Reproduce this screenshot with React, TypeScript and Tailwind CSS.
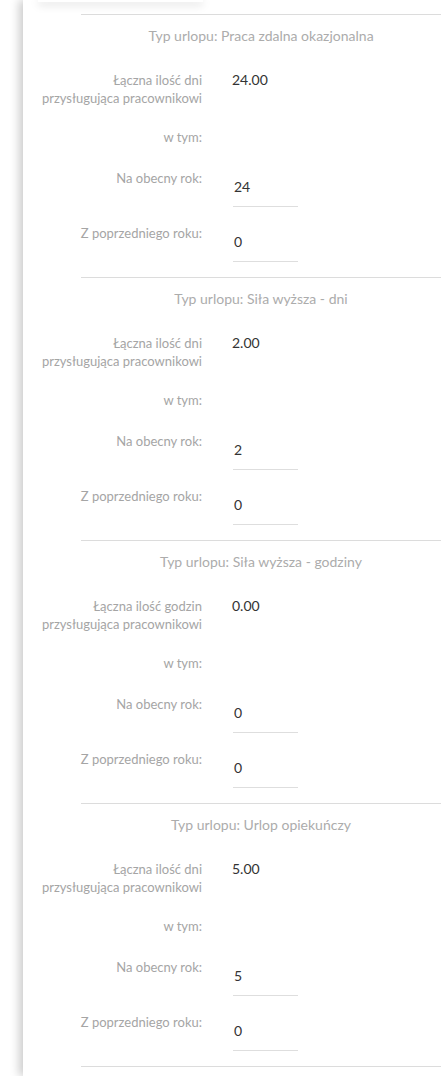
import React from "react";

interface Section {
  title: string;
  unit: string;
  total: string;
  current: string;
  previous: string;
}

const sections: Section[] = [
  { title: "Praca zdalna okazjonalna", unit: "dni", total: "24.00", current: "24", previous: "0" },
  { title: "Siła wyższa - dni", unit: "dni", total: "2.00", current: "2", previous: "0" },
  { title: "Siła wyższa - godziny", unit: "godzin", total: "0.00", current: "0", previous: "0" },
  { title: "Urlop opiekuńczy", unit: "dni", total: "5.00", current: "5", previous: "0" },
];

function Label({ children }: { children: React.ReactNode }) {
  return (
    <div className="w-[179px] shrink-0 text-right text-[13px] leading-[18px] text-[#a5a5a5]">
      {children}
    </div>
  );
}

function InputValue({ value }: { value: string }) {
  return (
    <div className="ml-[31px] h-[38px] w-[65px] border-b border-[#dedede] pl-[1px] pt-[9px] text-[14px] leading-[18px] text-[#333]">
      {value}
    </div>
  );
}

function LeaveSection({ s }: { s: Section }) {
  return (
    <section>
      <div className="ml-[58px] border-t border-[#dcdcdc]" />
      <h3 className="ml-[58px] pt-[12px] text-center text-[14px] font-normal leading-[18px] text-[#acacac]">
        Typ urlopu: {s.title}
      </h3>

      <div className="mt-[26px] flex">
        <Label>
          Łączna ilość {s.unit}
          <br />
          przysługująca pracownikowi
        </Label>
        <div className="ml-[30px] text-[14px] leading-[18px] text-[#333]">{s.total}</div>
      </div>

      <div className="mt-[21px] flex">
        <Label>w tym:</Label>
      </div>

      <div className="mt-[23px] flex">
        <Label>Na obecny rok:</Label>
        <InputValue value={s.current} />
      </div>

      <div className="mt-[17px] mb-[15px] flex">
        <Label>Z poprzedniego roku:</Label>
        <InputValue value={s.previous} />
      </div>
    </section>
  );
}

export default function App() {
  return (
    <div
      className="min-h-[1076px] overflow-hidden bg-white"
      style={{ fontFamily: "Lato, 'Open Sans', sans-serif" }}
    >
      <div className="ml-[23px] min-h-[1076px] bg-white shadow-[-4px_0_9px_rgba(0,0,0,0.2)]">
        <div className="ml-[15px] h-[2px] w-[165px] bg-white shadow-[0_2px_8px_rgba(0,0,0,0.28)]" />
        <div className="pt-[12px]">
          {sections.map((s) => (
            <LeaveSection key={s.title} s={s} />
          ))}
          <div className="ml-[58px] border-t border-[#dcdcdc]" />
        </div>
      </div>
    </div>
  );
}
